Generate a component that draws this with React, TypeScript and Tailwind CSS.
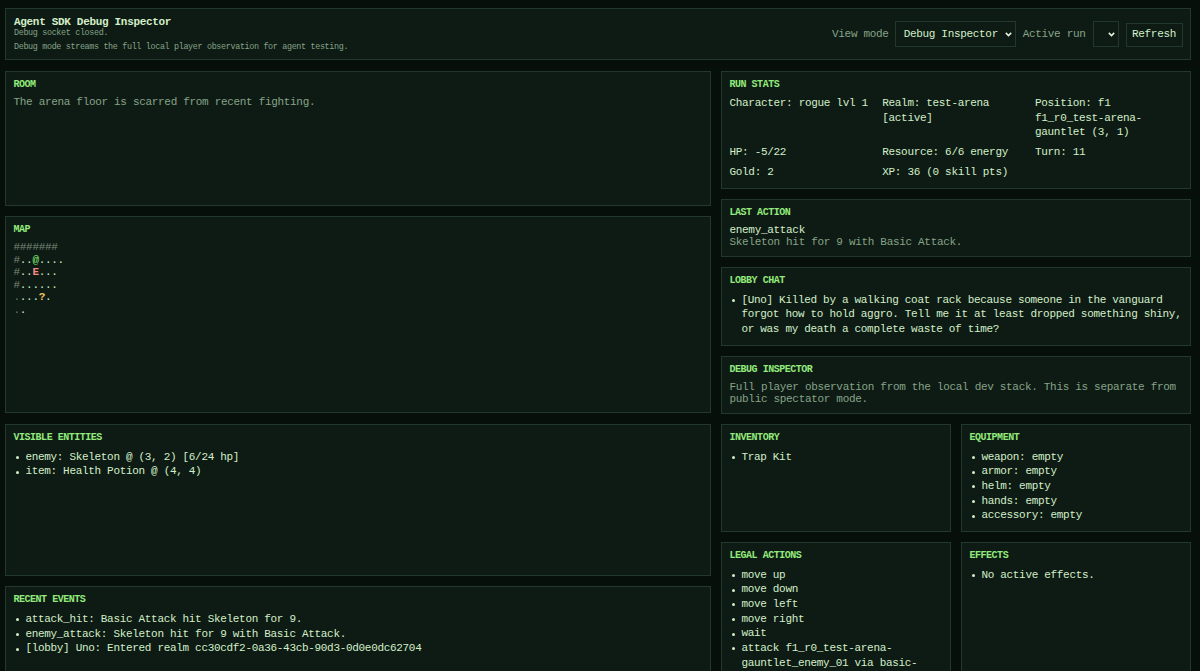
import type { ReactNode } from 'react'
import clsx from 'clsx'

const MAP_ROWS = ['#######', '#..@....', '#..E...', '#......', ',...?.', ',.']

const STATS = [
  'Character: rogue lvl 1',
  'Realm: test-arena [active]',
  'Position: f1 f1_r0_test-arena-gauntlet (3, 1)',
  'HP: -5/22',
  'Resource: 6/6 energy',
  'Turn: 11',
  'Gold: 2',
  'XP: 36 (0 skill pts)',
]

const ENTITIES = ['enemy: Skeleton @ (3, 2) [6/24 hp]', 'item: Health Potion @ (4, 4)']

const EVENTS = [
  'attack_hit: Basic Attack hit Skeleton for 9.',
  'enemy_attack: Skeleton hit for 9 with Basic Attack.',
  '[lobby] Uno: Entered realm cc30cdf2-0a36-43cb-90d3-0d0e0dc62704',
]

const CHAT = [
  '[Uno] Killed by a walking coat rack because someone in the vanguard forgot how to hold aggro. Tell me it at least dropped something shiny, or was my death a complete waste of time?',
]

const EQUIPMENT = ['weapon: empty', 'armor: empty', 'helm: empty', 'hands: empty', 'accessory: empty']

const ACTIONS = [
  'move up',
  'move down',
  'move left',
  'move right',
  'wait',
  'attack f1_r0_test-arena-gauntlet_enemy_01 via basic-attack',
]

function Panel({ title, className, children }: { title: string; className?: string; children: ReactNode }) {
  return (
    <section className={clsx('shrink-0 border border-[#22382b] bg-[#0e1b14] px-[7.5px] pt-2', className)}>
      <h2 className="mb-[6.5px] text-[10px] leading-[10.8px] font-bold tracking-[-0.48px] uppercase text-[#93ea7c]">{title}</h2>
      {children}
    </section>
  )
}

function List({ items }: { items: string[] }) {
  return (
    <ul className="-mt-[0.6px] leading-[14.67px]">
      {items.map(item => (
        <li key={item} className="flex">
          <span className="mt-[6.4px] mr-[6.9px] ml-[2px] size-[3px] shrink-0 rounded-full bg-[#d3efc9]" />
          <span>{item}</span>
        </li>
      ))}
    </ul>
  )
}

// a comma marks a remembered floor tile
function tileClass(tile: string) {
  if (tile === '#') return 'text-[#78887a]'
  if (tile === ',') return 'text-[#66766a]'
  if (tile === '@') return 'font-bold text-[#74dc66]'
  if (tile === 'E') return 'font-bold text-[#f58a80]'
  if (tile === '?') return 'font-bold text-[#f0c35a]'
  return undefined
}

function Chevron() {
  return (
    <svg width="7" height="5" viewBox="0 0 7 5" fill="none" stroke="#e6f5e0" strokeWidth="1.5" aria-hidden="true">
      <path d="M0.8 0.9 L3.5 3.6 L6.2 0.9" />
    </svg>
  )
}

function Header() {
  return (
    <header className="flex h-[52px] items-center justify-between border border-[#22382b] bg-[#0e1b14] pl-2 pr-[7.5px]">
      <div>
        <h1 className="-mt-px mb-px leading-[12px] font-bold">Agent SDK Debug Inspector</h1>
        <p className="text-[8.4px] leading-[9px] tracking-[-0.32px] text-[#86a388]">Debug socket closed.</p>
        <p className="mt-[5px] text-[8.4px] leading-[9px] tracking-[-0.32px] text-[#86a388]">
          Debug mode streams the full local player observation for agent testing.
        </p>
      </div>
      <div className="flex items-center">
        <span className="pt-px text-[#86a388]">View mode</span>
        <button className="ml-1.5 flex h-[26px] w-[121px] items-center justify-between border border-[#22382b] bg-[#0e1b14] pl-2 pr-[2.5px]">
          <span className="pt-px">Debug Inspector</span>
          <Chevron />
        </button>
        <span className="ml-[7px] pt-px text-[#86a388]">Active run</span>
        <button
          aria-label="Active run"
          className="ml-[7px] flex h-[26px] w-[26px] items-center justify-end border border-[#22382b] bg-[#0e1b14] pr-[2.5px]"
        >
          <Chevron />
        </button>
        <button className="ml-[7px] h-6 w-[57px] translate-y-px border border-[#22382b] bg-[#0e1b14] text-center">
          Refresh
        </button>
      </div>
    </header>
  )
}

export default function App() {
  return (
    <div className="h-[671px] overflow-hidden bg-[#070f0b] pt-2 pr-[9px] pl-[5px] font-['Liberation_Mono',monospace] text-[11px] leading-[11.87px] tracking-[-0.315px] text-[#d3efc9]">
      <Header />
      <main className="mt-[11px] flex gap-2.5">
        <div className="flex w-[706px] flex-col gap-[10.5px]">
          <Panel title="Room" className="h-[134.5px]">
            <p className="text-[#86a388]">The arena floor is scarred from recent fighting.</p>
          </Panel>
          <Panel title="Map" className="h-[197.4px]">
            <pre className="-mt-[1.2px] font-['Liberation_Mono',monospace] leading-[12.57px]">
              {MAP_ROWS.map((row, y) => (
                <div key={y}>
                  {row.split('').map((tile, x) => (
                    <span key={x} className={tileClass(tile)}>
                      {tile === ',' ? '.' : tile}
                    </span>
                  ))}
                </div>
              ))}
            </pre>
          </Panel>
          <Panel title="Visible Entities" className="h-[152px]">
            <List items={ENTITIES} />
          </Panel>
          <Panel title="Recent Events" className="h-[152px]">
            <List items={EVENTS} />
          </Panel>
        </div>
        <div className="flex w-[470px] flex-col gap-2.5">
          <Panel title="Run Stats" className="h-[118px]">
            <div className="-mt-[1.2px] grid grid-cols-3 gap-[5.24px] leading-[14.67px]">
              {STATS.map(stat => (
                <div key={stat}>{stat}</div>
              ))}
            </div>
          </Panel>
          <Panel title="Last Action" className="h-[58px]">
            <p>enemy_attack</p>
            <p className="text-[#86a388]">Skeleton hit for 9 with Basic Attack.</p>
          </Panel>
          <Panel title="Lobby Chat" className="h-[79px]">
            <List items={CHAT} />
          </Panel>
          <Panel title="Debug Inspector" className="h-[58px]">
            <p className="text-[#86a388]">
              Full player observation from the local dev stack. This is separate from public spectator mode.
            </p>
          </Panel>
          <div className="grid grid-cols-2 gap-2.5">
            <Panel title="Inventory" className="h-[108px]">
              <List items={['Trap Kit']} />
            </Panel>
            <Panel title="Equipment" className="h-[108px]">
              <List items={EQUIPMENT} />
            </Panel>
            <Panel title="Legal Actions" className="h-[160px]">
              <List items={ACTIONS} />
            </Panel>
            <Panel title="Effects" className="h-[160px]">
              <List items={['No active effects.']} />
            </Panel>
          </div>
        </div>
      </main>
    </div>
  )
}
